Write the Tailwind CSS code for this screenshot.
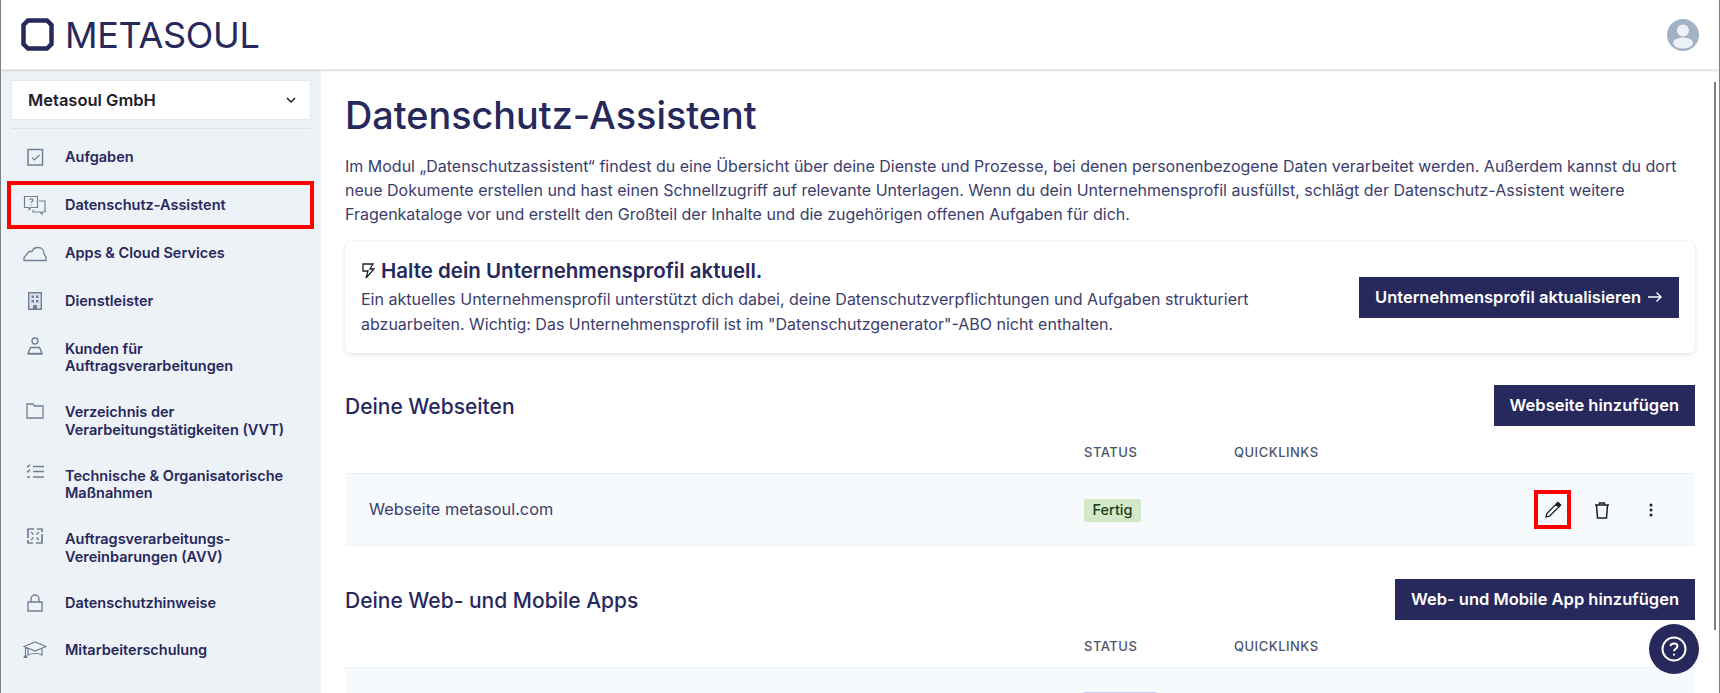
<!DOCTYPE html>
<html lang="de">
<head>
    <meta charset="UTF-8">
    <title>Datenschutz-Assistent | Metasoul</title>
    <script src="https://cdn.jsdelivr.net/npm/@tailwindcss/browser@4"></script>
</head>
<body class="h-[693px] w-[1720px] overflow-hidden bg-white font-['Inter',sans-serif] text-[#27285c]">
<div class="relative flex h-[693px] flex-col overflow-hidden border-x border-x-[#808080]">
    <header class="z-10 flex h-[70px] shrink-0 items-center justify-between border-b border-[#e5e7eb] bg-white pl-[20px] pr-[20px] shadow-sm">
        <div class="flex items-center gap-[11px]">
            <svg width="33" height="33" viewBox="0 0 33 33" fill="none"><path d="M7 2.500h19L30.500 7v19L26 30.500H7L2.500 26V7z" stroke="#27285c" stroke-width="4.500"/></svg>
            <span class="text-[36px] font-normal leading-none tracking-[-0.3px]">METASOUL</span>
        </div>
        <svg width="32" height="32" viewBox="0 0 32 32"><circle cx="16" cy="16" r="16" fill="#a3b1c6"/><circle cx="16" cy="11.500" r="6" fill="#edf2f7"/><ellipse cx="16" cy="24" rx="10" ry="5.500" fill="#edf2f7"/></svg>
    </header>
    <div class="flex min-h-0 flex-1">
        <aside class="w-[320px] shrink-0 bg-[#edf2f7] pt-[10px]">
            <div class="mx-[10px] flex h-[40px] items-center justify-between border border-[#e2e8f0] bg-white pl-[16px] pr-[13px] text-[16.500px] font-semibold text-[#1a202c]">
                <span>Metasoul GmbH</span>
                <svg width="12" height="12" viewBox="0 0 12 12" fill="none" stroke="#1a202c" stroke-width="1.500"><path d="M2 4l4 4 4-4"/></svg>
            </div>
            <div class="mx-[10px] mt-[8px] border-t border-[#dbe3ec]"></div>
            <nav class="mt-[4px] text-[14.500px] font-semibold leading-[17.500px]">
                <a class="flex h-[48px] items-center px-[22px]"><span class="flex w-[42px] shrink-0"><svg width="24" height="24" viewBox="0 0 24 24" fill="none" stroke="#718096" stroke-width="1.500"><path d="M5 4.500h14.500V20H5z"/><path d="M9 12.500l2.500 2.500 5-5" stroke-width="1.200"/></svg></span>Aufgaben</a>
                <a class="ml-[6px] mr-[7px] flex h-[48px] items-center border-[4px] border-[#ff0000] pl-[12px]"><span class="flex w-[42px] shrink-0"><svg width="24" height="24" viewBox="0 0 24 24" fill="none" stroke="#718096" stroke-width="1.200"><path d="M1.500 3.500h13v11H8l-2 2v-2H1.500z"/><path d="M16 8h6v11h-3v2l-2-2h-7v-2"/><path d="M6.500 7c.5-1.500 3.500-1.500 3.500.3 0 1.200-1.800 1.200-1.800 2.700M8.200 11.500v1"/></svg></span>Datenschutz-Assistent</a>
                <a class="flex h-[48px] items-center px-[22px]"><span class="flex w-[42px] shrink-0"><svg width="24" height="24" viewBox="0 0 24 24" fill="none" stroke="#718096" stroke-width="1.300"><path d="M1 19.500v-3l5-6h3c1-3 3-4 6-4 4 0 6 3 6 6l2 4v3z"/></svg></span>Apps &amp; Cloud Services</a>
                <a class="flex h-[48px] items-center px-[22px]"><span class="flex w-[42px] shrink-0 pl-[5px]"><svg width="14" height="18" viewBox="0 0 14 18" fill="#718096"><path d="M.7.700h12.600v16.600H.7z" fill="#dbe3ec" stroke="#718096" stroke-width="1.400"/><path d="M3.500 3.500h2.500V6H3.500zM8 3.500h2.500V6H8zM3.500 8h2.500v2.500H3.500zM8 8h2.500v2.500H8zM5 13h4v4.500H5z"/></svg></span>Dienstleister</a>
                <a class="flex h-[64px] items-center px-[22px]"><span class="flex w-[42px] shrink-0 self-start pt-[12px] pl-[4px]"><svg width="16" height="18" viewBox="0 0 16 18" fill="none" stroke="#718096" stroke-width="1.400"><circle cx="8" cy="4" r="3"/><path d="M3.500 10.500h9L15 16.500H1zM1 17h14"/></svg></span><span>Kunden für<br>Auftragsverarbeitungen</span></a>
                <a class="flex h-[63px] items-center px-[22px]"><span class="flex w-[42px] shrink-0 self-start pt-[14px] pl-[3px]"><svg width="18" height="16" viewBox="0 0 18 16" fill="none" stroke="#718096" stroke-width="1.300"><path d="M1 1h6l1.500 2H17v12H1z"/></svg></span><span>Verzeichnis der<br>Verarbeitungstätigkeiten (VVT)</span></a>
                <a class="flex h-[64px] items-center px-[22px]"><span class="flex w-[42px] shrink-0 self-start pt-[12px] pl-[3px]"><svg width="18" height="15" viewBox="0 0 18 15" fill="none" stroke="#718096" stroke-width="1.300"><path d="M7 2.500h11M7 7.500h11M7 13h11M1 2l1 1 2-2.500M1 7l1 1 2-2.500M1 13h3"/></svg></span><span>Technische &amp; Organisatorische<br>Maßnahmen</span></a>
                <a class="flex h-[63px] items-center px-[22px]"><span class="flex w-[42px] shrink-0 self-start pt-[12px] pl-[4px]"><svg width="16" height="16" viewBox="0 0 16 16" fill="none" stroke="#718096" stroke-width="1.700"><path d="M1 10V1h6M15 6v9H9M10 1h5v3M1 12v3h5"/><path d="M4 4l2.500 2.500M12 4L9.500 6.500M4 12l2.500-2.500M12 12L9.500 9.500" stroke-width="1.400"/></svg></span><span>Auftragsverarbeitungs-<br>Vereinbarungen (AVV)</span></a>
                <a class="flex h-[47px] items-center px-[22px]"><span class="flex w-[42px] shrink-0 pl-[4px]"><svg width="16" height="18" viewBox="0 0 16 18" fill="none" stroke="#718096" stroke-width="1.400"><path d="M1 8h14v9H1zM4 8V5a4 4 0 018 0v3"/></svg></span>Datenschutzhinweise</a>
                <a class="flex h-[48px] items-center px-[22px]"><span class="flex w-[42px] shrink-0"><svg width="24" height="18" viewBox="0 0 24 18" fill="none" stroke="#718096" stroke-width="1.200"><path d="M12 1L1 5.500 12 10l11-4.500zM5 8v6c3-2 11-2 14 0V8M2.500 6.500V14M1 16.500l1.500-2.500 1.500 2.500z"/></svg></span>Mitarbeiterschulung</a>
            </nav>
        </aside>
        <main class="min-w-0 flex-1 overflow-hidden pl-[24px] pr-[24px] pt-[23px]">
            <h1 class="text-[37.800px] font-medium leading-[44px]">Datenschutz-Assistent</h1>
            <p class="mt-[17px] w-[1340px] text-[16px] leading-[24px] text-[#3c3d6b]">Im Modul „Datenschutzassistent“ findest du eine Übersicht über deine Dienste und Prozesse, bei denen personenbezogene Daten verarbeitet werden. Außerdem kannst du dort neue Dokumente erstellen und hast einen Schnellzugriff auf relevante Unterlagen. Wenn du dein Unternehmensprofil ausfüllst, schlägt der Datenschutz-Assistent weitere Fragenkataloge vor und erstellt den Großteil der Inhalte und die zugehörigen offenen Aufgaben für dich.</p>
            <section class="mt-[15px] flex h-[112px] w-[1350px] items-center justify-between rounded-[6px] bg-white pl-[16px] pr-[16px] shadow-[0_1px_4px_rgba(0,0,0,0.14)]">
                <div class="w-[900px]">
                    <h2 class="flex items-center gap-[6px] text-[20.500px] font-semibold leading-[28px]">
                        <svg width="14" height="16" viewBox="0 0 14 16" fill="none" stroke="#1a202c" stroke-width="1.300"><path d="M2 1h10L9 6h4L5 15l2-7H2z"/></svg>
                        Halte dein Unternehmensprofil aktuell.</h2>
                    <p class="mt-[2px] text-[16px] leading-[25.500px] text-[#3c3d6b]">Ein aktuelles Unternehmensprofil unterstützt dich dabei, deine Datenschutzverpflichtungen und Aufgaben strukturiert abzuarbeiten. Wichtig: Das Unternehmensprofil ist im "Datenschutzgenerator"-ABO nicht enthalten.</p>
                </div>
                <a class="flex h-[41px] items-center gap-[6px] bg-[#27285c] px-[16px] text-[16.500px] font-semibold text-white">Unternehmensprofil aktualisieren <svg width="16" height="12" viewBox="0 0 16 12" fill="none" stroke="#fff" stroke-width="1.400"><path d="M1 6h13M9.500 1.500L14 6l-4.500 4.500"/></svg></a>
            </section>
            <section class="mt-[32px]">
                <div class="flex h-[41px] items-center justify-between">
                    <h2 class="mt-[2px] text-[21px] font-[550]">Deine Webseiten</h2>
                    <a class="flex h-[41px] items-center bg-[#27285c] px-[16px] text-[16.500px] font-semibold text-white">Webseite hinzufügen</a>
                </div>
                <div class="grid h-[47px] grid-cols-[739px_150px_1fr] items-center pt-[7px] text-[13px] font-medium tracking-[0.5px] text-[#4a5568]">
                    <span></span><span>STATUS</span><span>QUICKLINKS</span>
                </div>
                <div class="grid h-[73px] grid-cols-[739px_1fr_auto] items-center border-y border-[#edf2f7] bg-[#f7fafc] pl-[24px] pr-[37px]">
                    <span class="text-[16.300px] text-[#3c3d6b]">Webseite metasoul.com</span>
                    <span class="-ml-[24px]"><span class="inline-flex h-[23px] w-[57px] items-center justify-center rounded-[2px] bg-[#d3e8c8] text-[14.500px] font-medium text-[#1a3d1a]">Fertig</span></span>
                    <div class="flex items-center">
                        <span class="flex h-[39px] w-[37px] items-center justify-center border-[4px] border-[#ff0000]"><svg width="18" height="18" viewBox="0 0 18 18" fill="none" stroke="#1a202c" stroke-width="1.300"><path d="M2 16l.8-3.500L12 3.300l2.700 2.700L5.500 15.200z"/><path d="M12.500 2.800l1.500-1.500 2.700 2.700-1.500 1.500z" fill="#1a202c"/></svg></span>
                        <svg class="ml-[22px]" width="18" height="18" viewBox="0 0 18 18" fill="none" stroke="#1a202c" stroke-width="1.500"><path d="M2 4h14M6.500 4V2h5v2M3.500 4.500l1 12.500h9l1-12.500"/></svg>
                        <svg class="ml-[33px]" width="14" height="18" viewBox="0 0 14 18" fill="#1a202c"><circle cx="7" cy="4" r="1.500"/><circle cx="7" cy="9" r="1.500"/><circle cx="7" cy="14" r="1.500"/></svg>
                    </div>
                </div>
            </section>
            <section class="mt-[33px]">
                <div class="flex h-[41px] items-center justify-between">
                    <h2 class="mt-[2px] text-[21px] font-[550]">Deine Web- und Mobile Apps</h2>
                    <a class="flex h-[41px] items-center bg-[#27285c] px-[16px] text-[16.500px] font-semibold text-white">Web- und Mobile App hinzufügen</a>
                </div>
                <div class="grid h-[47px] grid-cols-[739px_150px_1fr] items-center pt-[7px] text-[13px] font-medium tracking-[0.5px] text-[#4a5568]">
                    <span></span><span>STATUS</span><span>QUICKLINKS</span>
                </div>
                <div class="h-[73px] border-y border-[#edf2f7] bg-[#f7fafc] pl-[739px] pt-[24px]"><span class="block h-[23px] w-[72px] bg-[#c8c9ee]"></span></div>
            </section>
        </main>
    </div>
    <div class="absolute right-[3px] top-[82px] h-[548px] w-[2px] bg-[#808080]"></div>
    <a class="absolute left-[1648px] top-[624px] flex h-[50px] w-[50px] items-center justify-center rounded-full bg-[#27285c]"><svg width="26" height="26" viewBox="0 0 26 26" fill="none" stroke="#fff" stroke-width="2"><circle cx="13" cy="13" r="11.500"/><path d="M9.500 10c.5-3.500 7-3.500 7 .3 0 2.500-3.500 2.500-3.500 5"/><path d="M13 17.800v1.800"/></svg></a>
</div>
</body>
</html>
